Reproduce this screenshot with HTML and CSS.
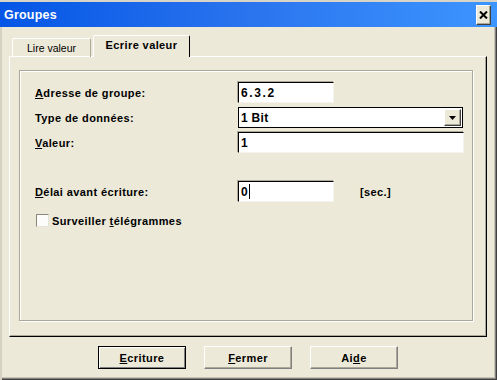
FILE: index.html
```html
<!DOCTYPE html>
<html>
<head>
<meta charset="utf-8">
<link rel="stylesheet" href="styles.css">
</head>
<body>
<div class="window">
  <div class="titlebar">
    <span class="title">Groupes</span>
    <div class="close">
      <svg width="9" height="8" viewBox="0 0 9 8"><path d="M1 0.5 L8 7.5 M8 0.5 L1 7.5" stroke="#000" stroke-width="2"/></svg>
    </div>
  </div>
  <div class="client">
    <div class="tabs">
      <div class="tab">Lire valeur</div>
      <div class="tab active">Ecrire valeur</div>
    </div>
    <div class="panel">
      <div class="groupbox">
        <div class="form">
          <div class="lbl"><u>A</u>dresse de groupe:</div>
          <div class="field short ip">6.3.2</div>

          <div class="lbl">Type de données:</div>
          <div class="select">
            <span class="sel-text">1 Bit</span>
            <span class="drop"><svg width="7" height="4" viewBox="0 0 7 4"><path d="M0 0 H7 L3.5 4 Z" fill="#000"/></svg></span>
          </div>

          <div class="lbl"><u>V</u>aleur:</div>
          <div class="field long">1</div>

          <div class="spacer"></div>

          <div class="lbl"><u>D</u>élai avant écriture:</div>
          <div class="delay-row">
            <div class="field short">0<span class="caret"></span></div>
            <span class="unit">[sec.]</span>
          </div>

          <div class="check-row">
            <span class="checkbox"></span>
            <span class="check-label">Surveiller <u>t</u>élégrammes</span>
          </div>
        </div>
      </div>
    </div>
    <div class="buttons">
      <div class="btn default"><span class="btn-in"><u>E</u>criture</span></div>
      <div class="btn"><span class="btn-in"><u>F</u>ermer</span></div>
      <div class="btn"><span class="btn-in">Ai<u>d</u>e</span></div>
    </div>
  </div>
</div>
</body>
</html>
```
FILE: styles.css
```css
* { box-sizing: border-box; }
html, body { margin: 0; padding: 0; background: #ece9d8; }
body {
  font-family: "Liberation Sans", Arial, sans-serif;
  font-size: 11px;
  font-weight: bold;
  letter-spacing: 0.4px;
  color: #000;
}
.window {
  width: 497px;
  height: 380px;
  background: #ece9d8;
  display: flex;
  flex-direction: column;
  border-top: 2px solid #d8d4c8;
}
.titlebar {
  height: 25px;
  flex: none;
  display: flex;
  align-items: center;
  justify-content: space-between;
  background: linear-gradient(to right, #0556e6, #2a74ee 50%, #3d95ff);
  padding-left: 4px;
  padding-right: 6px;
}
.title {
  color: #fff;
  font-size: 12.5px;
  letter-spacing: 0.2px;
}
.close {
  width: 15px;
  height: 20px;
  background: #ece9d8;
  border: 1px solid;
  border-color: #fff #404040 #404040 #fff;
  box-shadow: inset -1px -1px 0 #aca899;
  display: flex;
  align-items: center;
  justify-content: center;
}
.close svg { display: block; }

.client {
  flex: 1;
  padding: 9px 10px 0 9px;
  box-shadow: inset 2px 0 0 #d6d2c2, inset -1px -1px 0 #404040, inset -2px -2px 0 #808080, inset -3px -3px 0 #c8c4b4;
  display: flex;
  flex-direction: column;
}
.tabs {
  display: flex;
  align-items: flex-end;
  height: 21px;
  padding-left: 3px;
  position: relative;
  z-index: 1;
  margin-bottom: -1px;
}
.tab {
  height: 19px;
  width: 79px;
  border-top: 1px solid #fff;
  border-left: 1px solid #fff;
  border-right: 1px solid #aca899;
  border-radius: 2px 2px 0 0;
  font-weight: normal;
  letter-spacing: 0;
  font-size: 10.5px;
  display: flex;
  align-items: center;
  justify-content: center;
  padding-bottom: 1px;
}
.tab.active {
  height: 22px;
  width: 97px;
  margin-left: 2px;
  font-weight: bold;
  font-size: 11px;
  letter-spacing: 0.4px;
  border-right: 1px solid #000;
  background: #ece9d8;
  padding-bottom: 3px;
}
.panel {
  height: 281px;
  border: 1px solid;
  border-color: #fff #000 #000 #fff;
  box-shadow: inset -1px -1px 0 #aca899;
  padding: 13px 13px 15px 9px;
}
.groupbox {
  height: 251px;
  border: 1px solid #aca899;
  box-shadow: inset 1px 1px 0 #fff, 1px 1px 0 #fff;
  padding: 11px 0 0 15px;
}
.form {
  display: grid;
  grid-template-columns: 203px 1fr;
  grid-template-rows: 21px 21px 21px 20px 21px 21px;
  row-gap: 4px;
  align-items: center;
}
.lbl { white-space: nowrap; }
.spacer { grid-column: 1 / 3; }
.field {
  height: 21px;
  background: #fff;
  border: 1px solid;
  border-color: #000 #f4f3ee #f4f3ee #000;
  box-shadow: -1px -1px 0 #aca899;
  padding-left: 2px;
  display: flex;
  align-items: center;
  font-size: 12px;
  letter-spacing: 0.3px;
}
.field.ip { letter-spacing: 1.6px; }
.field.short { width: 96px; }
.field.long { width: 226px; }
.caret {
  width: 1px;
  height: 15px;
  background: #000;
  margin-left: 1px;
}
.select {
  width: 225px;
  height: 21px;
  background: #fff;
  border: 1px solid #000;
  display: flex;
  align-items: center;
  justify-content: space-between;
  padding: 0 1px 0 2px;
  font-size: 12px;
  letter-spacing: 0.3px;
}
.drop {
  width: 17px;
  height: 17px;
  background: #ece9d8;
  border: 1px solid;
  border-color: #fff #404040 #404040 #fff;
  box-shadow: inset -1px -1px 0 #aca899;
  display: flex;
  align-items: center;
  justify-content: center;
}
.drop svg { display: block; }
.delay-row {
  display: flex;
  align-items: center;
}
.unit { margin-left: 26px; }
.check-row {
  grid-column: 1 / 3;
  align-self: end;
  display: flex;
  align-items: center;
  margin-left: 1px;
}
.checkbox {
  width: 13px;
  height: 13px;
  background: #fcfcfa;
  border: 1px solid;
  border-color: #8a877a #e6e4da #e6e4da #8a877a;
  margin-right: 3px;
}
.buttons {
  display: flex;
  justify-content: center;
  gap: 18px;
  margin-top: 9px;
}
.btn {
  width: 88px;
  height: 23px;
  border: 1px solid;
  border-color: #fff #808080 #808080 #fff;
  box-shadow: inset -1px -1px 0 #aca899;
  display: flex;
  align-items: center;
  justify-content: center;
}
.btn.default {
  border: 1px solid #000;
  box-shadow: inset 1px 1px 0 #fff, inset -1px -1px 0 #808080;
}
.btn-in { display: block; padding-top: 1px; }
```
